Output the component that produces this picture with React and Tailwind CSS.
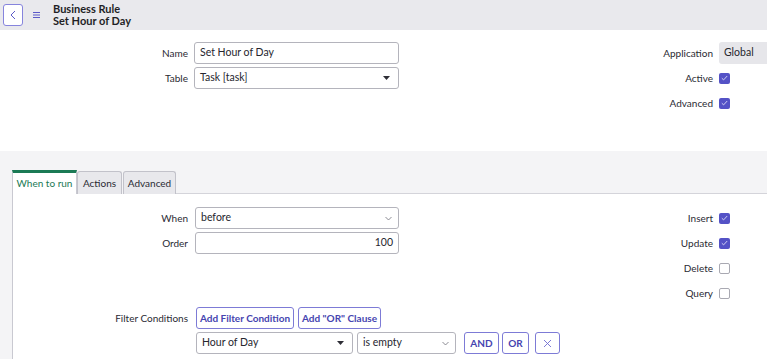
import React from 'react';

const Check = ({ checked }) => (
    <span
        className={`flex h-[11px] w-[11px] items-center justify-center rounded-[2px] ${checked ? 'bg-[#5452c6]' : 'border border-[#a9a9b2] bg-white'}`}
    >
        {checked && (
            <svg width="7" height="6" viewBox="0 0 7 6" fill="none">
                <path d="M0.8 3.2 L2.6 4.9 L6.2 1" stroke="#dcdcf5" strokeWidth="0.9" />
            </svg>
        )}
    </span>
);

const Caret = () => (
    <svg width="7" height="4" viewBox="0 0 7 4">
        <path d="M0 0 H7 L3.5 4 Z" fill="#2e2e36" />
    </svg>
);

const Chevron = () => (
    <svg width="7" height="5" viewBox="0 0 7 5" fill="none">
        <path d="M0.5 1 L3.5 4 L6.5 1" stroke="#6e6e78" strokeWidth="0.8" />
    </svg>
);

const Field = ({ children, className = '' }) => (
    <div className={`flex h-[22px] items-center rounded-[3px] border border-[#b4b4bc] bg-white px-[5px] text-[10.5px] text-[#26262e] ${className}`}>
        {children}
    </div>
);

const RightRow = ({ label, children }) => (
    <div className="flex h-[22px] items-center">
        <span className="flex-1 text-right">{label}</span>
        <div className="ml-[6px] w-[48px]">{children}</div>
    </div>
);

const OutlineBtn = ({ children, className = '' }) => (
    <button className={`flex h-[22px] items-center justify-center rounded-[3px] border border-[#7d7bd6] bg-white font-bold text-[#4644b0] ${className}`}>
        {children}
    </button>
);

const App = () => {
    return (
        <div className="h-[359px] w-[767px] overflow-hidden bg-white text-[10px] text-[#2a2a33]" style={{ fontFamily: 'Lato, "Open Sans", sans-serif' }}>
            {/* header */}
            <div className="flex h-[30px] items-center bg-[#e9e9ed] pl-[3px]">
                <button className="flex h-[22px] w-[20px] items-center justify-center rounded-[3px] border border-[#8684dd] bg-white">
                    <svg width="6" height="10" viewBox="0 0 6 10" fill="none">
                        <path d="M5 1 L1 5 L5 9" stroke="#5b59c8" strokeWidth="1" />
                    </svg>
                </button>
                <svg className="ml-[10px]" width="7" height="6" viewBox="0 0 7 6">
                    <path d="M0 0.5 H7 M0 3 H7 M0 5.5 H7" stroke="#5b59c8" strokeWidth="1" />
                </svg>
                <div className="ml-[13px] flex flex-col text-[11px] font-bold leading-[12px] text-[#1f1f26]">
                    <span>Business Rule</span>
                    <span>Set Hour of Day</span>
                </div>
            </div>

            {/* main form */}
            <div className="flex h-[121px] pt-[12px]">
                <div className="flex flex-col gap-[3px]">
                    <div className="flex h-[22px] items-center">
                        <span className="w-[188px] text-right">Name</span>
                        <Field className="ml-[6px] w-[205px]">Set Hour of Day</Field>
                    </div>
                    <div className="flex h-[22px] items-center">
                        <span className="w-[188px] text-right">Table</span>
                        <Field className="ml-[6px] w-[205px] justify-between pr-[8px]">
                            <span>Task [task]</span>
                            <Caret />
                        </Field>
                    </div>
                </div>
                <div className="flex flex-1 flex-col gap-[3px]">
                    <RightRow label="Application">
                        <div className="flex h-[22px] w-[60px] items-center rounded-l-[3px] bg-[#e6e6ea] px-[5px] text-[10.5px] text-[#26262e]">Global</div>
                    </RightRow>
                    <RightRow label="Active">
                        <Check checked />
                    </RightRow>
                    <RightRow label="Advanced">
                        <Check checked />
                    </RightRow>
                </div>
            </div>

            {/* related section */}
            <div className="h-[208px] bg-[#f4f4f6] pl-[12px] pt-[19px]">
                <div className="flex items-end">
                    <div className="flex h-[24px] w-[65px] items-center justify-center border-x border-t-[3px] border-x-[#c9c9d1] border-t-[#1b7a55] bg-white text-[#1b7a55]">
                        When to run
                    </div>
                    <div className="flex h-[23px] w-[45px] items-center justify-center rounded-t-[3px] border-x border-t border-[#c2c2ca] bg-[#e8e8ec]">
                        Actions
                    </div>
                    <div className="ml-px flex h-[23px] w-[53px] items-center justify-center rounded-t-[3px] border-x border-t border-[#c2c2ca] bg-[#e8e8ec]">
                        Advanced
                    </div>
                    <div className="flex-1 border-b border-[#d4d4da]" />
                </div>
                <div className="h-full border-l border-[#c9c9d1] bg-white pt-[13px]">
                    <div className="flex">
                        <div className="flex flex-col gap-[3px]">
                            <div className="flex h-[22px] items-center">
                                <span className="w-[175px] text-right">When</span>
                                <Field className="ml-[7px] w-[204px] justify-between pr-[6px]">
                                    <span>before</span>
                                    <Chevron />
                                </Field>
                            </div>
                            <div className="flex h-[22px] items-center">
                                <span className="w-[175px] text-right">Order</span>
                                <Field className="ml-[7px] w-[204px] justify-end">100</Field>
                            </div>
                        </div>
                        <div className="flex flex-1 flex-col gap-[3px]">
                            <RightRow label="Insert">
                                <Check checked />
                            </RightRow>
                            <RightRow label="Update">
                                <Check checked />
                            </RightRow>
                            <RightRow label="Delete">
                                <Check />
                            </RightRow>
                            <RightRow label="Query">
                                <Check />
                            </RightRow>
                        </div>
                    </div>
                    <div className="mt-[3px] flex h-[22px] items-center">
                        <span className="w-[175px] text-right">Filter Conditions</span>
                        <OutlineBtn className="ml-[8px] w-[98px]">Add Filter Condition</OutlineBtn>
                        <OutlineBtn className="ml-[4px] w-[83px]">Add "OR" Clause</OutlineBtn>
                    </div>
                    <div className="mt-[3px] flex h-[22px] items-center pl-[183px]">
                        <Field className="w-[157px] justify-between pr-[8px]">
                            <span>Hour of Day</span>
                            <Caret />
                        </Field>
                        <Field className="ml-[4px] w-[99px] justify-between pr-[6px]">
                            <span>is empty</span>
                            <Chevron />
                        </Field>
                        <OutlineBtn className="ml-[8px] w-[35px]">AND</OutlineBtn>
                        <OutlineBtn className="ml-[3px] w-[27px]">OR</OutlineBtn>
                        <OutlineBtn className="ml-[6px] w-[25px]">
                            <svg width="9" height="9" viewBox="0 0 9 9" fill="none">
                                <path d="M1 1 L8 8 M8 1 L1 8" stroke="#6e6cd0" strokeWidth="0.9" />
                            </svg>
                        </OutlineBtn>
                    </div>
                </div>
            </div>
        </div>
    );
};

export default App;
